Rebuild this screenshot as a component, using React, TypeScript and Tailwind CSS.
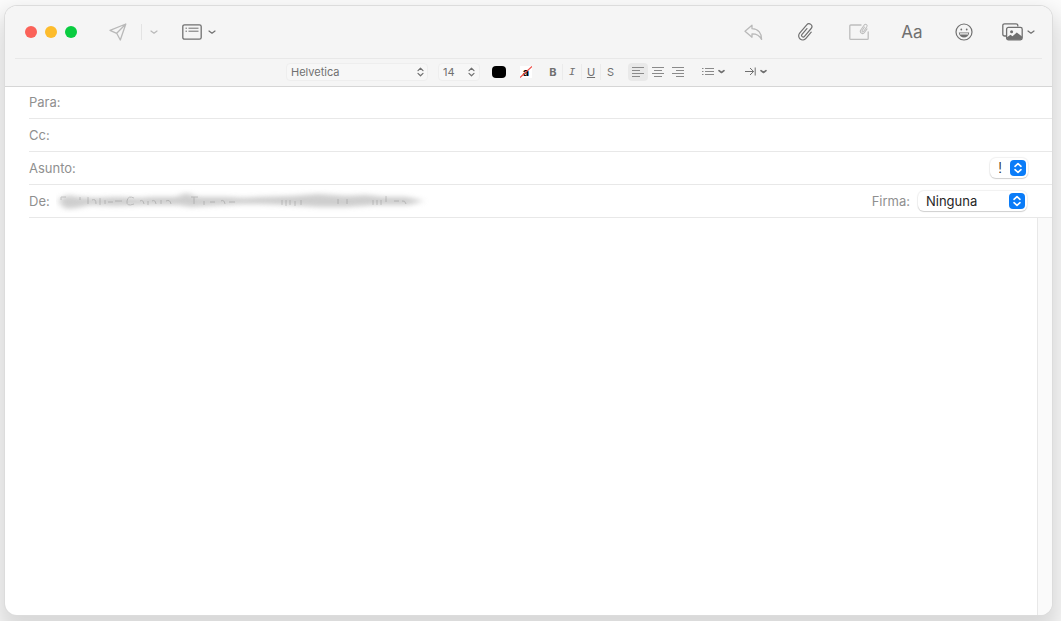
import { useState } from "react"
import type { ReactNode } from "react"

function ChevronDown({ className = "" }: { className?: string }) {
  return (
    <svg width="8" height="6" viewBox="0 0 8 6" fill="none" stroke="currentColor" strokeWidth="1.2" strokeLinecap="round" strokeLinejoin="round" className={className}>
      <path d="M1 2 4 4.2 7 2" />
    </svg>
  )
}

function UpDown({ className = "" }: { className?: string }) {
  return (
    <svg width="7" height="10" viewBox="0 0 7 10" fill="none" stroke="currentColor" strokeWidth="1.2" strokeLinecap="round" strokeLinejoin="round" className={className}>
      <path d="M1 3.6 3.5 1.2 6 3.6M1 6.4 3.5 8.8 6 6.4" />
    </svg>
  )
}

function BlueKnob() {
  return (
    <span className="pointer-events-none absolute right-0.5 top-1/2 flex h-4 w-4 -translate-y-1/2 items-center justify-center rounded bg-[#0a7cf8] text-white">
      <svg width="10" height="12" viewBox="0 0 10 12" fill="none" stroke="currentColor" strokeWidth="1.6" strokeLinecap="round" strokeLinejoin="round">
        <path d="M2 4.3 5 1.6 8 4.3M2 7.7 5 10.4 8 7.7" />
      </svg>
    </span>
  )
}

function SendIcon() {
  return (
    <svg width="18" height="18" viewBox="0 0 18 18" fill="none" stroke="currentColor" strokeWidth="1.3" strokeLinejoin="round">
      <path d="M16.8 1 1 7.3 7.7 10.3 11.3 17ZM16.8 1 7.7 10.3" />
    </svg>
  )
}

function HeaderFieldsIcon() {
  return (
    <svg width="20" height="16" viewBox="0 0 20 16" fill="none" stroke="currentColor" strokeWidth="1.3">
      <rect x="0.8" y="0.8" width="18.4" height="14.4" rx="1.8" />
      <path d="M3.5 4.2h1.5M6.5 4.2h10M3.5 7.2h1.5M6.5 7.2h10" strokeWidth="1" />
    </svg>
  )
}

function ReplyIcon() {
  return (
    <svg width="19" height="17" viewBox="0 0 19 17" fill="none" stroke="currentColor" strokeWidth="1.3" strokeLinejoin="round">
      <path d="M8 1.2 1 7.3 8 13.2V9.8C12.3 9.7 15.2 10.8 17.6 15.4 17.8 9.6 14.4 4.9 8 4.7Z" />
    </svg>
  )
}

function ClipIcon() {
  return (
    <svg width="18" height="20" viewBox="-9 -10 18 20" fill="none" stroke="currentColor" strokeWidth="1.2" strokeLinecap="round" strokeLinejoin="round">
      <path transform="rotate(40)" d="M4.1 -3.2V5A4.1 4.1 0 0 1 -4.1 5V-6A2.9 2.9 0 0 1 1.7 -6V4.4A1.6 1.6 0 0 1 -1.5 4.4V-3.2" />
    </svg>
  )
}

function MarkupIcon() {
  return (
    <svg width="20" height="18" viewBox="0 0 20 18" fill="none" stroke="currentColor" strokeWidth="1.3" strokeLinecap="round" strokeLinejoin="round">
      <path d="M12 2H1.8a1 1 0 0 0-1 1v12.4a1 1 0 0 0 1 1h16.4a1 1 0 0 0 1-1V9" />
      <path transform="translate(15.2 6) rotate(35) scale(.55)" d="M4.1 -3.2V5A4.1 4.1 0 0 1 -4.1 5V-6A2.9 2.9 0 0 1 1.7 -6V4.4A1.6 1.6 0 0 1 -1.5 4.4V-3.2" strokeWidth="1.8" />
    </svg>
  )
}

function SmileIcon() {
  return (
    <svg width="18" height="18" viewBox="0 0 18 18" fill="none" stroke="currentColor" strokeWidth="1.2">
      <circle cx="9" cy="9" r="8" />
      <circle cx="6.3" cy="6.5" r="0.9" fill="currentColor" stroke="none" />
      <circle cx="11.7" cy="6.5" r="0.9" fill="currentColor" stroke="none" />
      <path d="M3.8 9.4h10.4C13.8 12.6 11.7 14.5 9 14.5S4.2 12.6 3.8 9.4Z" fill="currentColor" stroke="none" />
      <path d="M5 10.8h8" stroke="#f5f5f5" strokeWidth="1.2" />
    </svg>
  )
}

function PhotosIcon() {
  return (
    <svg width="21" height="18" viewBox="0 0 21 18" fill="none" stroke="currentColor" strokeWidth="1.3" strokeLinejoin="round">
      <path d="M4 13H2.6A1.8 1.8 0 0 1 .8 11.2V2.6A1.8 1.8 0 0 1 2.6.8H14a1.8 1.8 0 0 1 1.8 1.8v1" />
      <rect x="4.6" y="4.4" width="15.6" height="12.4" rx="1.8" />
      <circle cx="9.6" cy="8.8" r="1.5" fill="currentColor" stroke="none" />
      <path d="M5 14.2 8.5 11.8 10.5 13.2 14.8 9.4 20 13.5V15a1.8 1.8 0 0 1-1.8 1.8H6.5A1.8 1.8 0 0 1 5 15Z" fill="currentColor" stroke="none" />
    </svg>
  )
}

function AlignIcon({ d }: { d: string }) {
  return (
    <svg width="12" height="10" viewBox="0 0 12 10" fill="none" stroke="currentColor" strokeWidth="1">
      <path d={d} />
    </svg>
  )
}

const alignments = [
  { name: "left", label: "Alinear a la izquierda", d: "M0 .5h12M0 3.5h8M0 6.5h12M0 9.5h8" },
  { name: "center", label: "Centrar", d: "M0 .5h12M2 3.5h8M0 6.5h12M2 9.5h8" },
  { name: "right", label: "Alinear a la derecha", d: "M0 .5h12M4 3.5h8M0 6.5h12M4 9.5h8" },
]

const styles = [
  { letter: "B", label: "Negrita", className: "font-bold" },
  { letter: "I", label: "Cursiva", className: "font-['Liberation_Mono',monospace] italic" },
  { letter: "U", label: "Subrayado", className: "underline" },
  { letter: "S", label: "Tachado", className: "" },
]

interface ToolButtonProps {
  label: string;
  className?: string;
  children: ReactNode;
}

function ToolButton({ label, className = "", children }: ToolButtonProps) {
  return (
    <button type="button" aria-label={label} className={`flex items-center justify-center ${className}`}>
      {children}
    </button>
  )
}

function Toolbar() {
  return (
    <div className="flex h-[52px] items-center pl-5 pr-[17px] text-[#707070]">
      <div className="flex gap-2">
        <button type="button" aria-label="Cerrar" className="h-3 w-3 rounded-full bg-[#fb6259]" />
        <button type="button" aria-label="Minimizar" className="h-3 w-3 rounded-full bg-[#fdbc2c]" />
        <button type="button" aria-label="Ampliar" className="h-3 w-3 rounded-full bg-[#09cc40]" />
      </div>
      <ToolButton label="Enviar" className="ml-8 text-[#b9b9b9]"><SendIcon /></ToolButton>
      <span className="ml-3.5 h-4 w-px bg-[#e3e3e3]" />
      <ToolButton label="Opciones de envío" className="ml-2 text-[#b9b9b9]"><ChevronDown /></ToolButton>
      <ToolButton label="Campos de cabecera" className="ml-6 gap-1.5">
        <HeaderFieldsIcon />
        <ChevronDown />
      </ToolButton>

      <div className="ml-auto flex items-center">
        <ToolButton label="Responder" className="text-[#b9b9b9]"><ReplyIcon /></ToolButton>
        <ToolButton label="Adjuntar" className="ml-[34px]"><ClipIcon /></ToolButton>
        <ToolButton label="Marcación" className="ml-[34px] text-[#bdbdbd]"><MarkupIcon /></ToolButton>
        <ToolButton label="Formato" className="ml-8 w-[22px] text-[17px] leading-5">Aa</ToolButton>
        <ToolButton label="Emoji" className="ml-8"><SmileIcon /></ToolButton>
        <ToolButton label="Fotos" className="ml-[29px] gap-1">
          <PhotosIcon />
          <ChevronDown />
        </ToolButton>
      </div>
    </div>
  )
}

function FormatBar() {
  const [align, setAlign] = useState("left");

  return (
    <div className="flex h-7 items-center justify-center border-b border-[#d6d6d6] pb-0.5 pr-1 text-[11px] leading-4 text-[#707070]">
      <div className="relative flex h-[18px] w-[142px] items-center rounded-sm border border-[#eeeeee] bg-[#f7f7f7]">
        <select aria-label="Tipo de letra" className="h-4 w-full appearance-none bg-transparent pl-1 pr-4">
          <option>Helvetica</option>
        </select>
        <UpDown className="pointer-events-none absolute right-[3px]" />
      </div>
      <div className="relative ml-2.5 flex h-[18px] w-[42px] items-center rounded-sm border border-[#eeeeee] bg-[#f7f7f7]">
        <select aria-label="Tamaño" className="h-4 w-full appearance-none bg-transparent pl-1 pr-4">
          <option>14</option>
        </select>
        <UpDown className="pointer-events-none absolute right-1" />
      </div>
      <button type="button" aria-label="Color del texto" className="ml-3 h-3 w-3.5 rounded-sm bg-black" />
      <ToolButton label="Color de fondo" className="relative ml-3.5 h-3 w-3 bg-white font-bold text-black">
        a
        <svg width="12" height="12" viewBox="0 0 12 12" className="absolute inset-0">
          <path d="M0 11.5 12 .5" stroke="#ee4b45" strokeWidth="1.2" />
        </svg>
      </ToolButton>
      <div className="ml-3 flex divide-x divide-[#ebebeb]">
        {styles.map((s) => (
          <button key={s.letter} type="button" aria-label={s.label} className={`h-4 w-[19px] ${s.className}`}>
            {s.letter}
          </button>
        ))}
      </div>
      <div className="ml-2 flex text-[#8a8a8a]">
        {alignments.map((a) => (
          <button
            key={a.name}
            type="button"
            aria-label={a.label}
            onClick={() => setAlign(a.name)}
            className={`flex h-[18px] w-5 items-center justify-center rounded-sm ${align === a.name ? "bg-[#e9e9e9]" : ""}`}
          >
            <AlignIcon d={a.d} />
          </button>
        ))}
      </div>
      <ToolButton label="Listas" className="ml-3.5 gap-1">
        <svg width="12" height="8" viewBox="0 0 12 8" fill="none" stroke="#8a8a8a" strokeWidth="1">
          <path d="M0 .5h1.5M3 .5h9M0 3.5h1.5M3 3.5h9M0 6.5h1.5M3 6.5h9" />
        </svg>
        <ChevronDown className="h-[5px] w-[7px] stroke-2" />
      </ToolButton>
      <ToolButton label="Sangría" className="ml-5 gap-1">
        <svg width="11" height="9" viewBox="0 0 11 9" fill="none" stroke="currentColor" strokeWidth="1" strokeLinejoin="round">
          <path d="M0 4.5h8.5M5 1 8.6 4.5 5 8M10.2.5v8" />
        </svg>
        <ChevronDown className="h-[5px] w-[7px] stroke-2" />
      </ToolButton>
    </div>
  )
}

interface FieldProps {
  id: string;
  label: string;
  children?: ReactNode;
}

function Field({ id, label, children }: FieldProps) {
  return (
    <div className="ml-6 flex h-[33px] items-center border-b border-[#e8e8e8]">
      <label htmlFor={id} className="text-[#8f8f8f]">{label}</label>
      <input id={id} type="text" className="ml-2 h-6 min-w-0 flex-1 bg-transparent text-[#262626] outline-none" />
      {children}
    </div>
  )
}

// Sender address, smudged for privacy
function HiddenSender() {
  return (
    <svg width="374" height="24" viewBox="0 0 374 24" fill="#b4b4b4" className="shrink-0">
      <defs>
        <filter id="smudge" x="-5%" y="-50%" width="110%" height="200%">
          <feGaussianBlur stdDeviation="3 2.4" />
        </filter>
        <filter id="soft" x="-5%" y="-50%" width="110%" height="200%">
          <feGaussianBlur stdDeviation="0.7" />
        </filter>
      </defs>
      <g filter="url(#smudge)" opacity="0.65">
        <path d="M3 10 12 6 22 8 40 9 60 8 84 9 96 8 120 8 130 4 142 8 170 8 188 9 204 8 236 7 262 5 290 7 310 6 328 8 350 8 368 12 352 16 320 16 290 18 262 18 230 16 204 15 186 15 150 17 134 18 122 16 90 16 60 17 34 16 20 19 10 20 4 15Z" />
      </g>
      <g filter="url(#soft)" stroke="#777" strokeWidth="1" opacity="0.35" fill="none">
        <path d="M5 8h5M5 8v3M24 8v3M32 8v7M36 11q4-2 4 4M44 9v7M49 11v4M52 13h5M59 12h7M78 9q-6-3-7 3t7 3M84 12q3-2 4 3M92 12v4M96 12q3-2 4 3M105 11v4M110 12q4-2 5 3M135 8h7M138 8v7M148 12v4M154 13h5M165 12q3-2 4 3M173 13h6M226 11v5M230 11v6M234 11v5M239 12v5M245 11v5M282 10v5M291 10v5M317 11v5M321 11v5M325 11v5M330 7v6M338 12h5M346 12q3-1 4 3" />
      </g>
    </svg>
  )
}

export default function App() {
  const [body, setBody] = useState("");

  return (
    <div className="flex h-screen overflow-hidden bg-[#fcfcfc] pb-1.5 pl-[5px] pr-[9px] pt-1.5 font-['Inter','Liberation_Sans',sans-serif] text-[13px] leading-5">
      <main className="flex min-w-0 flex-1 flex-col overflow-hidden rounded-xl bg-white shadow-[0_0_0_1px_#dcdcdc,0_14px_24px_8px_rgba(0,0,0,0.14)]">
        {/* Title bar and formatting controls */}
        <header className="relative -mb-px bg-[#f5f5f5]">
          <Toolbar />
          <div className="mx-2.5 h-px bg-[#e8e8e8]" />
          <FormatBar />
        </header>

        {/* Message headers */}
        <Field id="to" label="Para:" />
        <Field id="cc" label="Cc:" />
        <Field id="subject" label="Asunto:">
          <div className="relative mr-6 h-5 w-[38px] rounded-md bg-white shadow-[0_0_1px_1px_rgba(0,0,0,0.06),0_1px_1px_rgba(0,0,0,0.14)]">
            <select aria-label="Prioridad" className="h-5 w-full appearance-none bg-transparent pl-2 text-[15px] font-light text-[#262626]">
              <option>!</option>
            </select>
            <BlueKnob />
          </div>
        </Field>
        <div className="ml-6 flex h-[33px] items-center border-b border-[#e8e8e8]">
          <span className="text-[#8f8f8f]">De:</span>
          <span className="ml-1.5 min-w-0 flex-1 overflow-hidden"><HiddenSender /></span>
          <label htmlFor="signature" className="text-[#8f8f8f]">Firma:</label>
          <div className="relative ml-2 mr-[25px] h-5 w-[109px] rounded-md bg-white shadow-[0_0_1px_1px_rgba(0,0,0,0.06),0_1px_1px_rgba(0,0,0,0.14)]">
            <select id="signature" className="h-5 w-full appearance-none bg-transparent pl-2 text-[#262626]">
              <option>Ninguna</option>
            </select>
            <BlueKnob />
          </div>
        </div>

        {/* Message body with scroll gutter */}
        <div className="flex min-h-0 flex-1">
          <textarea
            aria-label="Mensaje"
            className="min-w-0 flex-1 resize-none px-6 py-3 text-sm outline-none"
            value={body}
            onChange={(e) => setBody(e.target.value)}
          />
          <div className="w-[15px] border-l border-[#e8e8e8] bg-[#fafafa]" />
        </div>
      </main>
    </div>
  )
}
